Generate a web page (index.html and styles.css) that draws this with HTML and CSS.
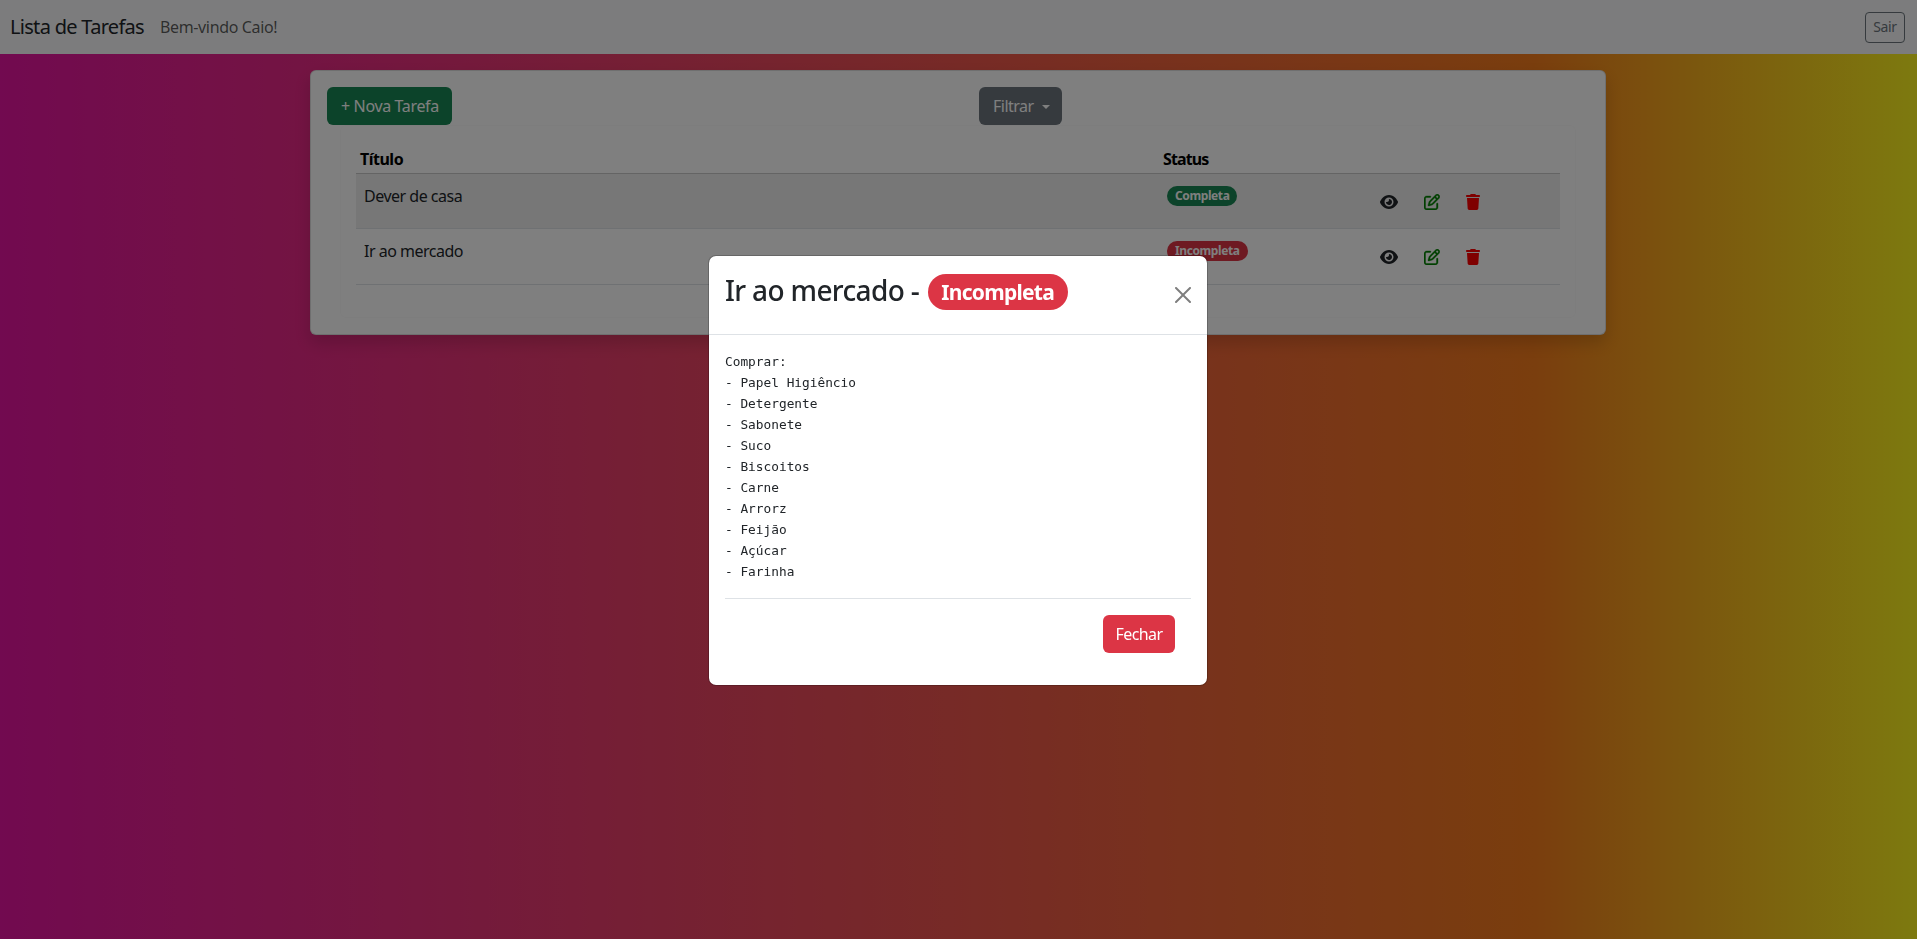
FILE: index.html
```html
<!DOCTYPE html>
<html lang="pt-BR">
<head>
<meta charset="utf-8">
<title>Lista de Tarefas</title>
<link rel="stylesheet" href="styles.css">
</head>
<body>
<nav class="navbar">
  <a class="brand">Lista de Tarefas</a>
  <span class="welcome">Bem-vindo Caio!</span>
  <button class="btn-logout">Sair</button>
</nav>
<main class="container">
  <section class="card">
    <div class="toolbar">
      <button class="btn btn-new">+ Nova Tarefa</button>
      <button class="btn btn-filter">Filtrar<span class="caret"></span></button>
    </div>
    <div class="inner">
      <table class="tasks">
        <thead>
          <tr><th class="col-title">Título</th><th class="col-status">Status</th><th></th></tr>
        </thead>
        <tbody>
          <tr class="striped">
            <td class="cell-text">Dever de casa</td>
            <td class="cell-badge"><span class="pill pill-ok">Completa</span></td>
            <td class="cell-actions">
              <span class="icon-btn"><svg class="ico-eye" viewBox="0 0 576 512"><path d="M288 32c-80.8 0-145.5 36.8-192.6 80.6C48.6 156 17.3 208 2.5 243.7c-3.3 7.9-3.3 16.7 0 24.6C17.3 304 48.6 356 95.4 399.4C142.5 443.2 207.2 480 288 480s145.5-36.8 192.6-80.6c46.8-43.5 78.1-95.4 93-131.1c3.3-7.9 3.3-16.7 0-24.6c-14.9-35.7-46.2-87.7-93-131.1C433.5 68.8 368.8 32 288 32zM144 256a144 144 0 1 1 288 0 144 144 0 1 1 -288 0zm144-64c0 35.3-28.7 64-64 64c-7.1 0-13.9-1.2-20.3-3.3c-5.5-1.8-11.9 1.6-11.7 7.4c.3 6.9 1.3 13.8 3.2 20.7c13.7 51.2 66.4 81.6 117.6 67.9s81.6-66.4 67.9-117.6c-11.1-41.5-47.8-69.4-88.6-71.1c-5.8-.2-9.2 6.1-7.4 11.7c2.1 6.4 3.3 13.2 3.3 20.3z"/></svg></span>
              <span class="icon-btn"><svg class="ico-edit" viewBox="0 0 512 512"><path d="M441 58.9L453.1 71c9.4 9.4 9.4 24.6 0 33.9L424 134.1 377.9 88 407 58.9c9.4-9.4 24.6-9.4 33.9 0zM209.8 256.2L344 121.9 390.1 168 255.8 302.2c-2.9 2.9-6.5 5-10.4 6.1l-58.5 16.7 16.7-58.5c1.1-3.9 3.2-7.5 6.1-10.4zM373.1 25L175.8 222.2c-8.7 8.7-15 19.4-18.3 31.1l-28.6 100c-2.4 8.4-.1 17.4 6.1 23.6s15.2 8.5 23.6 6.1l100-28.6c11.8-3.4 22.5-9.7 31.1-18.3L487 138.9c28.1-28.1 28.1-73.7 0-101.8L474.9 25C446.8-3.1 401.2-3.1 373.1 25zM88 64C39.4 64 0 103.4 0 152V424c0 48.6 39.4 88 88 88H360c48.6 0 88-39.4 88-88V312c0-13.3-10.7-24-24-24s-24 10.7-24 24V424c0 22.1-17.9 40-40 40H88c-22.1 0-40-17.9-40-40V152c0-22.1 17.9-40 40-40H200c13.3 0 24-10.7 24-24s-10.7-24-24-24H88z"/></svg></span>
              <span class="icon-btn"><svg class="ico-trash" viewBox="0 0 448 512"><path d="M135.2 17.7L128 32H32C14.3 32 0 46.3 0 64S14.3 96 32 96H416c17.7 0 32-14.3 32-32s-14.3-32-32-32H320l-7.2-14.3C307.4 6.8 296.3 0 284.2 0H163.8c-12.1 0-23.2 6.8-28.6 17.7zM416 128H32L53.2 467c1.6 25.3 22.6 45 47.9 45H346.9c25.3 0 46.3-19.7 47.9-45L416 128z"/></svg></span>
            </td>
          </tr>
          <tr>
            <td class="cell-text">Ir ao mercado</td>
            <td class="cell-badge"><span class="pill pill-bad">Incompleta</span></td>
            <td class="cell-actions">
              <span class="icon-btn"><svg class="ico-eye" viewBox="0 0 576 512"><path d="M288 32c-80.8 0-145.5 36.8-192.6 80.6C48.6 156 17.3 208 2.5 243.7c-3.3 7.9-3.3 16.7 0 24.6C17.3 304 48.6 356 95.4 399.4C142.5 443.2 207.2 480 288 480s145.5-36.8 192.6-80.6c46.8-43.5 78.1-95.4 93-131.1c3.3-7.9 3.3-16.7 0-24.6c-14.9-35.7-46.2-87.7-93-131.1C433.5 68.8 368.8 32 288 32zM144 256a144 144 0 1 1 288 0 144 144 0 1 1 -288 0zm144-64c0 35.3-28.7 64-64 64c-7.1 0-13.9-1.2-20.3-3.3c-5.5-1.8-11.9 1.6-11.7 7.4c.3 6.9 1.3 13.8 3.2 20.7c13.7 51.2 66.4 81.6 117.6 67.9s81.6-66.4 67.9-117.6c-11.1-41.5-47.8-69.4-88.6-71.1c-5.8-.2-9.2 6.1-7.4 11.7c2.1 6.4 3.3 13.2 3.3 20.3z"/></svg></span>
              <span class="icon-btn"><svg class="ico-edit" viewBox="0 0 512 512"><path d="M441 58.9L453.1 71c9.4 9.4 9.4 24.6 0 33.9L424 134.1 377.9 88 407 58.9c9.4-9.4 24.6-9.4 33.9 0zM209.8 256.2L344 121.9 390.1 168 255.8 302.2c-2.9 2.9-6.5 5-10.4 6.1l-58.5 16.7 16.7-58.5c1.1-3.9 3.2-7.5 6.1-10.4zM373.1 25L175.8 222.2c-8.7 8.7-15 19.4-18.3 31.1l-28.6 100c-2.4 8.4-.1 17.4 6.1 23.6s15.2 8.5 23.6 6.1l100-28.6c11.8-3.4 22.5-9.7 31.1-18.3L487 138.9c28.1-28.1 28.1-73.7 0-101.8L474.9 25C446.8-3.1 401.2-3.1 373.1 25zM88 64C39.4 64 0 103.4 0 152V424c0 48.6 39.4 88 88 88H360c48.6 0 88-39.4 88-88V312c0-13.3-10.7-24-24-24s-24 10.7-24 24V424c0 22.1-17.9 40-40 40H88c-22.1 0-40-17.9-40-40V152c0-22.1 17.9-40 40-40H200c13.3 0 24-10.7 24-24s-10.7-24-24-24H88z"/></svg></span>
              <span class="icon-btn"><svg class="ico-trash" viewBox="0 0 448 512"><path d="M135.2 17.7L128 32H32C14.3 32 0 46.3 0 64S14.3 96 32 96H416c17.7 0 32-14.3 32-32s-14.3-32-32-32H320l-7.2-14.3C307.4 6.8 296.3 0 284.2 0H163.8c-12.1 0-23.2 6.8-28.6 17.7zM416 128H32L53.2 467c1.6 25.3 22.6 45 47.9 45H346.9c25.3 0 46.3-19.7 47.9-45L416 128z"/></svg></span>
            </td>
          </tr>
        </tbody>
      </table>
    </div>
  </section>
</main>
<div class="backdrop"></div>
<div class="modal-layer">
  <div class="modal">
    <header class="modal-head">
      <h3 class="modal-title">Ir ao mercado - <span class="pill pill-bad pill-large">Incompleta</span></h3>
      <svg class="close" viewBox="0 0 16 16"><path d="M.293.293a1 1 0 011.414 0L8 6.586 14.293.293a1 1 0 111.414 1.414L9.414 8l6.293 6.293a1 1 0 01-1.414 1.414L8 9.414l-6.293 6.293a1 1 0 01-1.414-1.414L6.586 8 .293 1.707a1 1 0 010-1.414z"/></svg>
    </header>
    <div class="modal-body">
<pre class="description">Comprar:
- Papel Higiêncio
- Detergente
- Sabonete
- Suco
- Biscoitos
- Carne
- Arrorz
- Feijão
- Açúcar
- Farinha</pre>
      <footer class="modal-foot"><button class="btn btn-close-modal">Fechar</button></footer>
    </div>
  </div>
</div>
</body>
</html>
```

FILE: styles.css
```css
* { box-sizing: border-box; }
html, body { height: 100%; }
body {
  margin: 0;
  overflow: hidden;
  font-family: "Noto Sans", "Open Sans", sans-serif;
  font-size: 16px;
  line-height: 24px;
  color: #212529;
  background: linear-gradient(to right, #e414a0 0%, #f47c1c 80%, #fbf41e 100%);
}
.navbar {
  height: 54px;
  background: #f8f9fa;
  display: flex;
  align-items: center;
  padding: 0 12px 0 10px;
}
.brand { font-size: 20px; margin-right: 16px; letter-spacing: -0.7px; }
.welcome { color: rgba(0,0,0,.65); letter-spacing: -0.36px; }
.btn-logout {
  margin-left: auto;
  width: 40px;
  height: 31px;
  padding: 0;
  border: 1px solid #6c757d;
  border-radius: 4px;
  background: transparent;
  color: #6c757d;
  font: 14px/20px "Noto Sans", sans-serif;
  letter-spacing: -0.4px;
}
.container { width: 1320px; margin: 0 0 0 298px; padding: 16px 12px 0; }
.card {
  background: #fff;
  border: 1px solid rgba(0,0,0,.125);
  border-radius: 6px;
  box-shadow: 0 8px 16px rgba(0,0,0,.15);
  padding: 16px;
  height: 265px;
}
.toolbar { display: flex; gap: 527px; }
.btn {
  height: 38px;
  padding: 0 13px;
  border: 1px solid transparent;
  border-radius: 6px;
  font: 16px/24px "Noto Sans", sans-serif;
  letter-spacing: -0.5px;
  color: #fff;
  white-space: nowrap;
}
.btn-new { width: 125px; background: #198754; letter-spacing: -0.36px; }
.btn-filter { width: 83px; background: #6c757d; }
.caret {
  display: inline-block;
  margin-left: 8px;
  vertical-align: 3px;
  border-top: 4.8px solid currentColor;
  border-left: 4.8px solid transparent;
  border-right: 4.8px solid transparent;
}
.inner {
  margin: 0 13px;
  height: 193px;
  padding: 14px 15px 0;
  border: 1px solid rgba(0,0,0,.02);
  border-radius: 6px;
}
.tasks { width: 1204px; border-collapse: collapse; table-layout: fixed; }
.tasks th {
  text-align: left;
  font-weight: 700;
  padding: 7px 4px 2px;
  color: #000;
  border-bottom: 1px solid #c9c9c9;
  letter-spacing: -0.5px;
}
.col-title { width: 803px; }
.tasks .col-status { width: 200px; letter-spacing: -0.9px; }
.tasks td { height: 55px; padding: 0 8px; border-bottom: 1px solid #dee2e6; vertical-align: top; }
.tasks tr:last-child td { height: 56px; }
.striped td { background: #eee; }
.tasks .cell-text { padding-top: 10px; letter-spacing: -0.5px; }
.tasks .cell-badge { padding-top: 12px; line-height: 0; }
.tasks .cell-actions { padding-top: 9px; padding-left: 8px; }
.cell-actions { white-space: nowrap; font-size: 0; }
.pill {
  display: inline-block;
  padding: 4px 8px;
  font-size: 12px;
  font-weight: 700;
  line-height: 12px;
  color: #fff;
  border-radius: 10px;
  letter-spacing: -0.4px;
}
.pill-ok { background: #198754; }
.pill-bad { background: #dc3545; }
.pill-large {
  margin-left: 2px;
  padding: 7px 13.6px;
  font-size: 21px;
  line-height: 22px;
  border-radius: 18px;
  vertical-align: 1px;
  letter-spacing: -0.72px;
}
.icon-btn {
  display: inline-flex;
  align-items: center;
  height: 38px;
  padding: 0 13px;
}
.icon-btn svg { display: block; height: 16px; }
.ico-eye { width: 18px; fill: #212529; }
.ico-edit { width: 16px; fill: green; stroke: green; stroke-width: 12; }
.ico-trash { width: 14px; fill: #f00; }
.backdrop {
  position: fixed;
  inset: 0;
  background: rgba(0,0,0,.5);
}
.modal-layer {
  position: fixed;
  inset: 0;
  display: flex;
  justify-content: center;
  padding: 255px 1px 0 0;
}
.modal {
  width: 500px;
  height: 431px;
  background: #fff;
  border: 1px solid rgba(0,0,0,.2);
  border-radius: 8px;
  background-clip: padding-box;
}
.modal-head {
  height: 79px;
  padding: 0 16px;
  display: flex;
  align-items: center;
  justify-content: space-between;
  border-bottom: 1px solid #dee2e6;
}
.modal-title {
  margin: 0 0 8px;
  font-size: 28px;
  line-height: 36px;
  font-weight: 500;
  letter-spacing: -0.65px;
}
.close { width: 16px; height: 16px; fill: #000; opacity: .5; margin-top: 0; }
.modal-body { padding: 16px; }
.description {
  margin: 0 0 16px;
  font: 12.8px/21px "DejaVu Sans Mono", monospace;
  color: #212529;
}
.modal-foot {
  border-top: 1px solid #dee2e6;
  padding: 16px 16px 0;
  display: flex;
  justify-content: flex-end;
}
.btn-close-modal { width: 72px; padding: 0; background: #dc3545; letter-spacing: -0.6px; }
```
